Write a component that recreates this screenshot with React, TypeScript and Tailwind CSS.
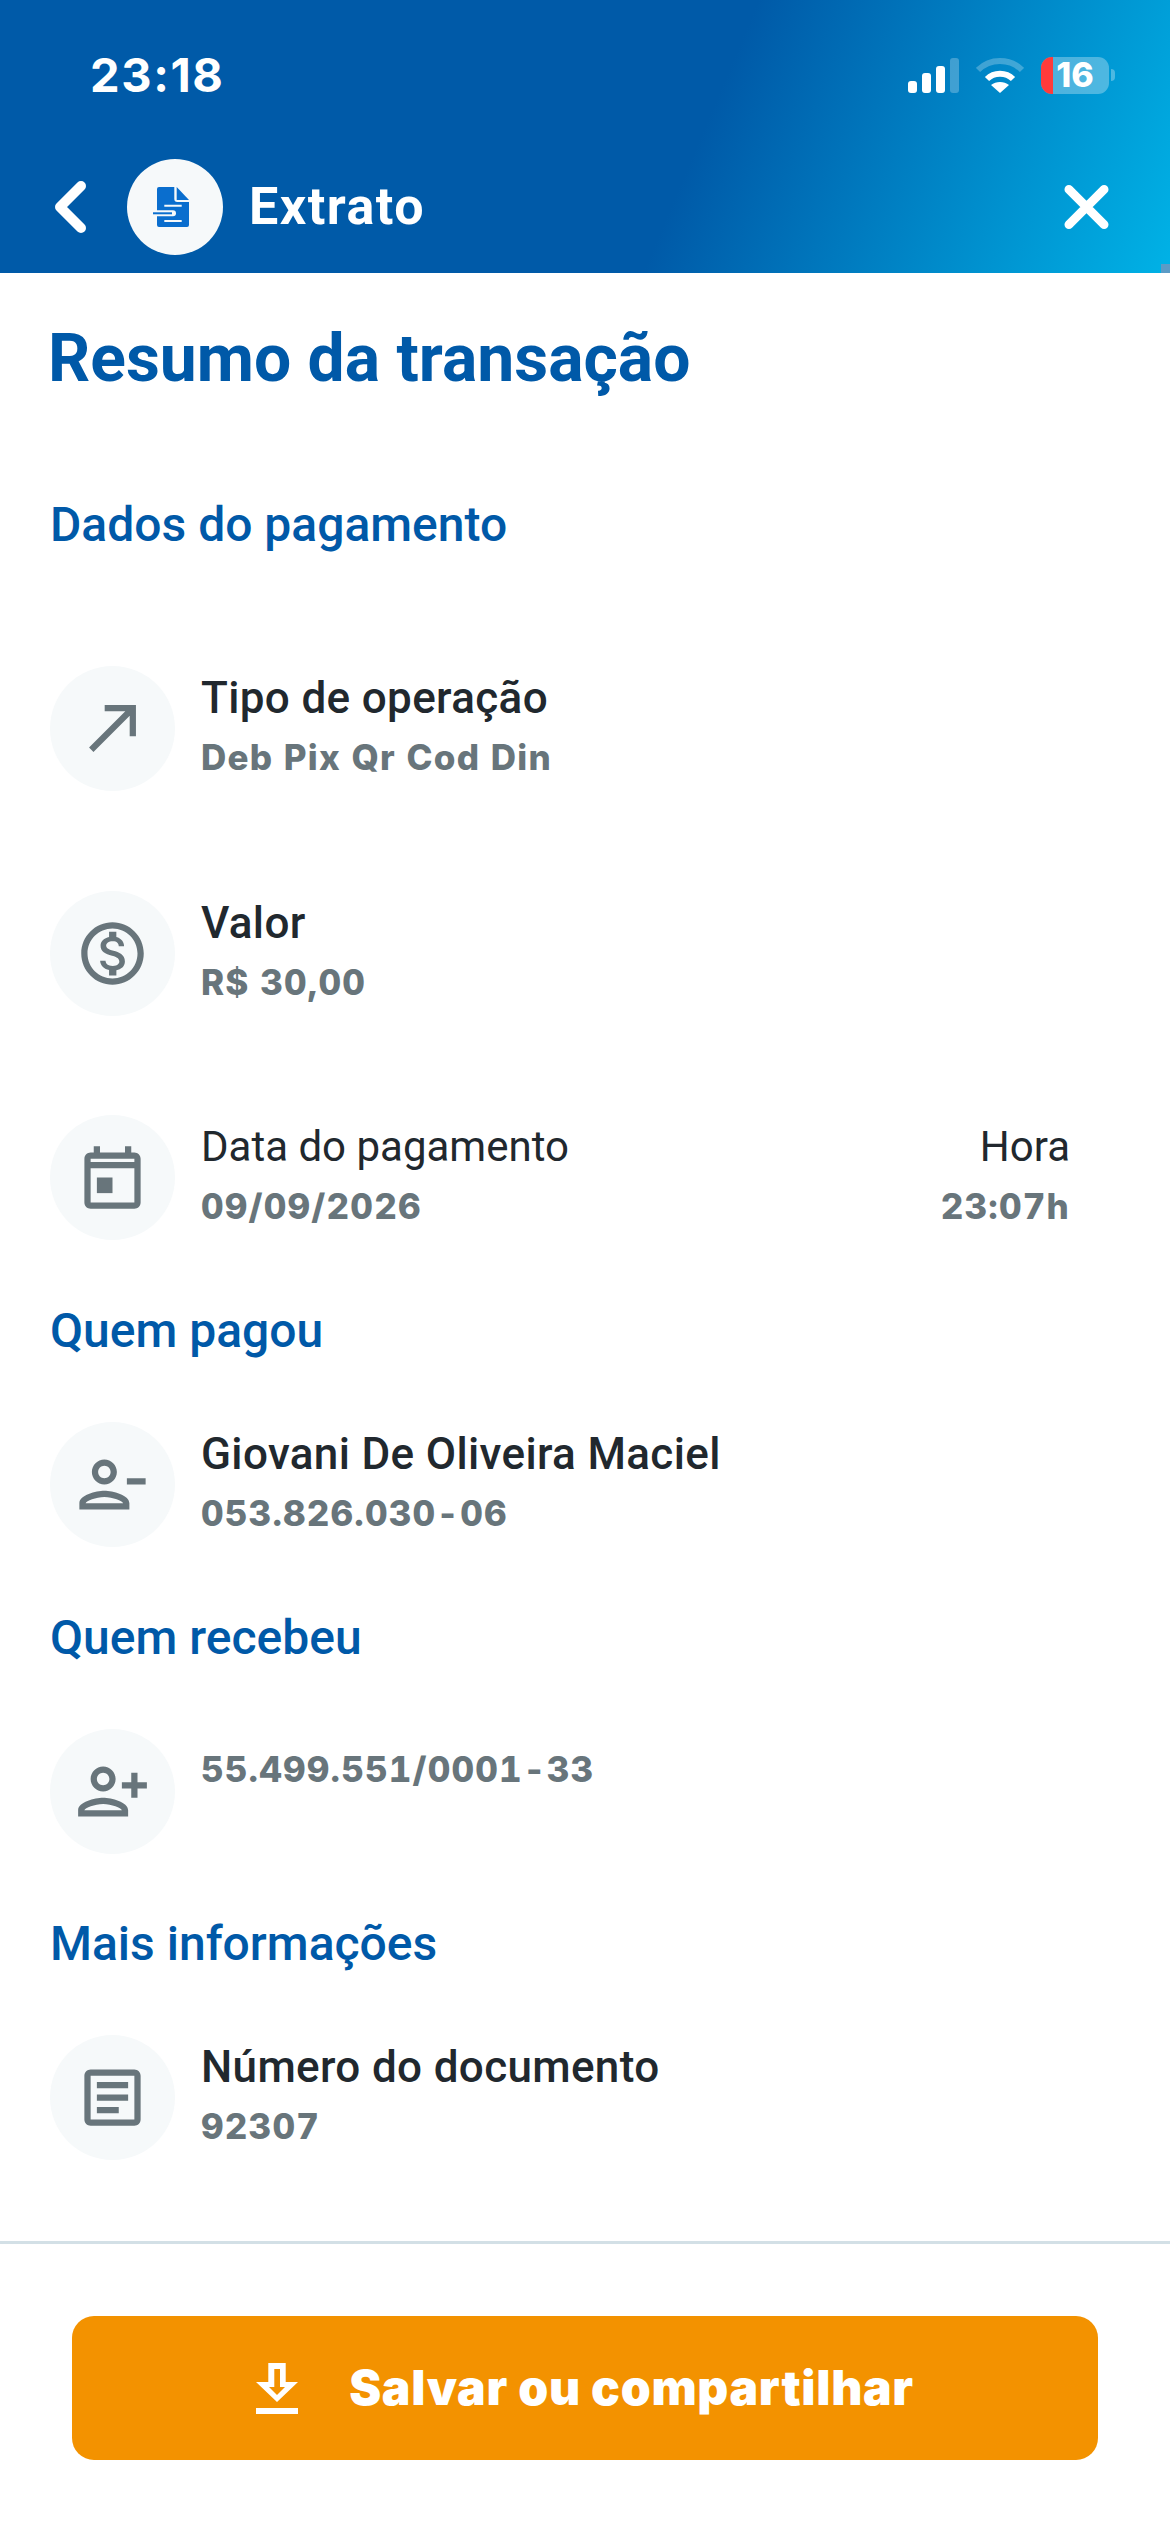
import React from 'react';

const Icon = ({ children }: { children: React.ReactNode }) => (
  <svg className="w-[75px] h-[75px] text-[#68757b]" viewBox="0 0 24 24" fill="currentColor">
    {children}
  </svg>
);

const ArrowIcon = () => (
  <Icon>
    <path d="M9 5v2h6.59L4 18.59 5.41 20 17 8.41V15h2V5H9z" transform="translate(0.5 -0.5)" />
  </Icon>
);

const MoneyIcon = () => (
  <Icon>
    <path d="M12 2C6.48 2 2 6.48 2 12s4.48 10 10 10 10-4.48 10-10S17.52 2 12 2zm0 18c-4.41 0-8-3.59-8-8s3.59-8 8-8 8 3.59 8 8-3.59 8-8 8zm.31-8.86c-1.77-.45-2.34-.94-2.34-1.67 0-.84.79-1.43 2.1-1.43 1.38 0 1.9.66 1.94 1.64h1.71c-.05-1.34-.87-2.57-2.49-2.97V5H10.9v1.69c-1.51.32-2.72 1.3-2.72 2.81 0 1.79 1.49 2.69 3.66 3.21 1.95.46 2.34 1.15 2.34 1.87 0 .53-.39 1.39-2.1 1.39-1.6 0-2.23-.72-2.32-1.64H8.04c.1 1.7 1.36 2.66 2.86 2.97V19h2.34v-1.67c1.52-.29 2.72-1.16 2.73-2.77-.01-2.2-1.9-2.96-3.66-3.42z" />
  </Icon>
);

const CalendarIcon = () => (
  <Icon>
    <path d="M19 4h-1V2h-2v2H8V2H6v2H5c-1.11 0-1.99.9-1.99 2L3 20c0 1.1.89 2 2 2h14c1.1 0 2-.9 2-2V6c0-1.1-.9-2-2-2zm0 16H5V9h14v11zM5 7V6h14v1H5z" />
    <path d="M7 12h5v5H7z" />
  </Icon>
);

const personPath =
  'M14 8c0-2.21-1.79-4-4-4S6 5.79 6 8s1.79 4 4 4 4-1.79 4-4zm-2 0c0 1.1-.9 2-2 2s-2-.9-2-2 .9-2 2-2 2 .9 2 2zM2 18v2h16v-2c0-2.66-5.33-4-8-4s-8 1.34-8 4zm2 0c.2-.71 3.3-2 6-2 2.69 0 5.78 1.28 6 2H4z';

const PersonMinusIcon = () => (
  <Icon>
    <path d={personPath} transform="translate(-0.6 0)" />
    <path d="M16.6 10h6v2h-6z" />
  </Icon>
);

const PersonPlusIcon = () => (
  <Icon>
    <path d={personPath} transform="translate(-1 0)" />
    <path d="M18 6v3h-3v2h3v3h2v-3h3V9h-3V6h-2z" />
  </Icon>
);

const ArticleIcon = () => (
  <Icon>
    <path d="M19 5v14H5V5h14m0-2H5c-1.1 0-2 .9-2 2v14c0 1.1.9 2 2 2h14c1.1 0 2-.9 2-2V5c0-1.1-.9-2-2-2z" />
    <path d="M14 17H7v-2h7v2zm3-4H7v-2h10v2zm0-4H7V7h10v2z" />
  </Icon>
);

const StatusBar = () => (
  <div className="flex items-center justify-between h-[148px] pl-[90px] pr-[55px] pt-[2px]">
    <span className="font-['Inter',sans-serif] text-[47px] font-bold tracking-[1.6px] text-white">23:18</span>
    <div className="flex items-center">
      <svg width="51" height="35" viewBox="0 0 51 35" fill="white">
        <rect x="0" y="23" width="9" height="12" rx="3" />
        <rect x="14" y="15" width="9" height="20" rx="3" />
        <rect x="28" y="8" width="9" height="27" rx="3" />
        <rect x="42" y="0" width="9" height="35" rx="3" opacity="0.25" />
      </svg>
      <svg className="ml-[17px]" width="48" height="36" viewBox="0 0 48 36" fill="none" stroke="white" strokeWidth="6">
        <path d="M2 13C14 1 34 1 46 13" opacity="0.25" />
        <path d="M11 22c7-7 19-7 26 0" />
        <path d="M24 36l-9-8c5-4 13-4 18 0z" fill="white" stroke="none" />
      </svg>
      <div className="ml-[17px] relative w-[68px] h-[37px] rounded-[11px] bg-white/30 flex items-center justify-center">
        <div className="absolute left-0 top-0 bottom-0 w-[12px] rounded-l-[11px] bg-[#ff3b3b]" />
        <span className="relative font-['Inter',sans-serif] text-[34px] font-extrabold text-white leading-none">16</span>
      </div>
      <div className="ml-[2px] w-[4px] h-[12px] rounded-r-full bg-white/30" />
    </div>
  </div>
);

const NavBar = () => (
  <div className="flex items-center h-[125px] pb-[8px] pl-[55px] pr-[61px]">
    <svg width="31" height="52" viewBox="0 0 31 52" fill="none" stroke="white" strokeWidth="10" strokeLinecap="round" strokeLinejoin="round">
      <path d="M26 5L5 26l21 21" />
    </svg>
    <div className="ml-[41px] w-[96px] h-[96px] rounded-full bg-[#f6f9fa] flex items-center justify-center">
      <svg width="48" height="44" viewBox="0 0 48 44">
        <path d="M8 2h15.3v12a3 3 0 0 0 3 3H38v23a2 2 0 0 1-2 2H8a2 2 0 0 1-2-2V4a2 2 0 0 1 2-2z" fill="#0a6ece" />
        <path d="M25.7 2L38 15H25.7z" fill="#0a6ece" />
        <path d="M13.3 19.8h17.4v2H13.3zM13.3 35h17.4v2H13.3z" fill="#f6f9fa" />
        <path d="M2 25.3h20a3 3 0 0 1 0 6H2z" fill="#f6f9fa" />
        <path d="M2 27.3h19v2H2z" fill="#0a6ece" />
      </svg>
    </div>
    <span className="ml-[26px] font-['Roboto',sans-serif] text-[52px] font-bold tracking-[1.5px] text-white leading-none">Extrato</span>
    <svg className="ml-auto" width="45" height="46" viewBox="0 0 46 46" fill="none" stroke="white" strokeWidth="9" strokeLinecap="round">
      <path d="M5 5l36 36M41 5L5 41" />
    </svg>
  </div>
);

const valueClass = "font-['Inter',sans-serif] text-[35px] leading-[44px] font-extrabold tabular-nums tracking-[1.2px] text-[#68757b]";

const Row = ({
  icon,
  label,
  value,
  regular,
  right,
  className,
}: {
  icon: React.ReactNode;
  label?: string;
  value: string;
  regular?: boolean;
  right?: { label: string; value: string };
  className?: string;
}) => (
  <div className={`flex h-[125px] ${className || ''}`}>
    <div className="w-[125px] h-[125px] rounded-full bg-[#f6f9fa] flex items-center justify-center flex-shrink-0">{icon}</div>
    <div className="ml-[26px] pt-[8px] flex-1 min-w-0">
      {label && (
        <p className={`leading-[48px] text-[#21282e] ${regular ? 'text-[42px] font-normal' : 'text-[44px] font-medium tracking-[0.35px]'}`}>{label}</p>
      )}
      <p className={`${valueClass} ${label ? 'mt-[13px]' : 'mt-[10px]'}`}>{value}</p>
    </div>
    {right && (
      <div className="pt-[8px] text-right">
        <p className="text-[42px] leading-[48px] font-normal text-[#21282e]">{right.label}</p>
        <p className={`${valueClass} mt-[13px]`}>{right.value}</p>
      </div>
    )}
  </div>
);

const SectionTitle = ({ children, className }: { children: React.ReactNode; className?: string }) => (
  <h2 className={`text-[48px] leading-[54px] font-medium text-[#0059a8] ${className || ''}`}>{children}</h2>
);

export default function App() {
  return (
    <div className="w-[1170px] h-[2532px] bg-white flex flex-col font-['Roboto',sans-serif]">
      <header className="relative h-[273px] bg-[linear-gradient(113deg,#005aa8_59%,#00b2e6_100%)]">
        <StatusBar />
        <NavBar />
        <div className="absolute right-0 bottom-0 w-[9px] h-[9px] bg-[#5b9bc6]" />
      </header>

      <main className="flex-1 pl-[50px] pr-[100px]">
        <h1 className="mt-[51px] -ml-[2px] text-[66px] leading-[70px] font-bold text-[#0059a8]">Resumo da transação</h1>
        <SectionTitle className="mt-[104px]">Dados do pagamento</SectionTitle>
        <Row className="mt-[114px]" icon={<ArrowIcon />} label="Tipo de operação" value="Deb Pix Qr Cod Din" />
        <Row className="mt-[100px]" icon={<MoneyIcon />} label="Valor" value="R$ 30,00" />
        <Row
          className="mt-[99px]"
          icon={<CalendarIcon />}
          label="Data do pagamento"
          value="09/09/2026"
          regular
          right={{ label: 'Hora', value: '23:07h' }}
        />
        <SectionTitle className="mt-[64px]">Quem pagou</SectionTitle>
        <Row className="mt-[64px]" icon={<PersonMinusIcon />} label="Giovani De Oliveira Maciel" value="053.826.030-06" />
        <SectionTitle className="mt-[64px]">Quem recebeu</SectionTitle>
        <Row className="mt-[64px]" icon={<PersonPlusIcon />} value="55.499.551/0001-33" />
        <SectionTitle className="mt-[63px]">Mais informações</SectionTitle>
        <Row className="mt-[64px]" icon={<ArticleIcon />} label="Número do documento" value="92307" />
      </main>

      <footer className="h-[291px] border-t-[3px] border-[#d3e0e6] px-[72px] pt-[72px]">
        <button className="w-full h-[144px] rounded-[22px] bg-[#f39200] flex items-center justify-center">
          <svg width="42" height="51" viewBox="0 0 42 51" fill="white">
            <path fillRule="evenodd" d="M12.3 0H29.7V19H42L21 39 0 19H12.3ZM18.3 6V24H13L21 32 29 24H24V6Z" />
            <path d="M0 45h42v6H0z" />
          </svg>
          <span className="ml-[51px] font-['Inter',sans-serif] text-[48px] font-black tracking-[0.7px] text-white">Salvar ou compartilhar</span>
        </button>
      </footer>
    </div>
  );
}
